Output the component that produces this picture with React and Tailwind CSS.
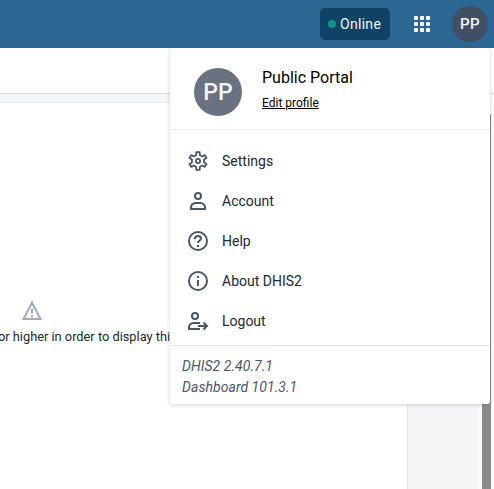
const icon = {
  width: 24,
  height: 24,
  viewBox: '0 0 24 24',
  fill: 'none',
  stroke: '#4a5768',
  strokeWidth: 2,
};

// Outline of a six-toothed gear: two outer and two inner corners per tooth.
const gearPoints = [0, 60, 120, 180, 240, 300]
  .flatMap((tooth) =>
    [[-17, 6.2], [-11, 9], [11, 9], [17, 6.2]].map(([offset, radius]) => {
      const angle = ((tooth + offset) * Math.PI) / 180;
      return `${(12 + radius * Math.sin(angle)).toFixed(2)},${(12 - radius * Math.cos(angle)).toFixed(2)}`;
    })
  )
  .join(' ');

function SettingsIcon() {
  return (
    <svg {...icon} strokeWidth="1.8" strokeLinejoin="round">
      <polygon points={gearPoints} />
      <circle cx="12" cy="12" r="2.1" />
    </svg>
  );
}

function AccountIcon() {
  return (
    <svg {...icon}>
      <circle cx="12" cy="7" r="3" />
      <path d="M5 20v-1.500a4.500 4.500 0 0 1 4.500-4.500h5a4.500 4.500 0 0 1 4.500 4.500V20z" />
    </svg>
  );
}

function HelpIcon() {
  return (
    <svg {...icon}>
      <circle cx="12" cy="12" r="9" />
      <path d="M9 10V9.500C9 8 10.200 7 12 7s3 1 3 2.500c0 2-3 2-3 4.500" />
      <path d="M11 17h2" />
    </svg>
  );
}

function InfoIcon() {
  return (
    <svg {...icon}>
      <circle cx="12" cy="12" r="9" />
      <path d="M12 7v2M12 11v6" />
    </svg>
  );
}

function LogoutIcon() {
  return (
    <svg {...icon}>
      <circle cx="9" cy="7" r="3" />
      <path d="M14 14H7.500A4.500 4.500 0 0 0 3 18.500V20h11" />
      <path d="M12 17h9M17.500 13.500 21 17l-3.500 3.500" />
    </svg>
  );
}

const items = [
  ['Settings', SettingsIcon],
  ['Account', AccountIcon],
  ['Help', HelpIcon],
  ['About DHIS2', InfoIcon],
  ['Logout', LogoutIcon],
];

function HeaderBar() {
  return (
    <header className="flex h-12 items-center bg-[#2c6693] pr-[6px]">
      <div className="ml-auto flex h-8 w-[70px] items-center gap-1 rounded-[5px] bg-[#104167] pl-2 text-[14px] tracking-[0.3px] text-[#f3f5f7]">
        <span className="size-2 rounded-full bg-[#0b9b85]" />
        Online
      </div>
      <svg className="ml-6" width="16" height="16" fill="#fff">
        {[0, 6, 12].map((y) =>
          [0, 6, 12].map((x) => <rect key={`${x}-${y}`} x={x} y={y} width="4" height="4" rx="1" />)
        )}
      </svg>
      <div className="ml-[22px] flex size-9 items-center justify-center rounded-full bg-[#404f63] text-[15px] font-medium tracking-[0.500px] text-[#f3f5f7]">
        PP
      </div>
    </header>
  );
}

function Dashboard() {
  return (
    <main className="flex h-[441px] flex-col">
      <div className="h-[46px] border-b border-[#d0d9e5] bg-white" />
      <div className="flex min-h-0 flex-1">
        <div className="flex min-w-0 flex-1 flex-col bg-[#f3f5f7] pt-2">
          <div className="flex w-[408px] flex-1 flex-col border-t border-r border-[#e4e8ee] bg-white pt-[196px]">
            <svg className="ml-5 shrink-0" width="24" height="24" fill="none" stroke="#a0adba" strokeWidth="2">
              <path d="M12 3.500 20.500 20h-17z" />
              <path d="M12 9.500v5M12 16v2" />
            </svg>
            <p className="mt-[6px] ml-[-2px] text-[12.800px] leading-4 whitespace-nowrap text-[#212934]">
              or higher in order to display thi
            </p>
          </div>
        </div>
        <div className="w-[15px] bg-[#fcfcfc] pt-[9px] pl-[3px]">
          <svg width="9" height="11" fill="#8b8b8b">
            <path d="M4.500 0 9 2H0z" />
          </svg>
          <div className="h-[376px] w-[9px] bg-[#8b8b8b]" />
        </div>
      </div>
    </main>
  );
}

function ProfileMenu() {
  return (
    <div className="absolute top-12 left-[170px] h-[356px] w-80 rounded-[3px] bg-white shadow-[0_1px_4px_rgba(33,41,52,0.2)]">
      <div className="flex h-[82px] border-b border-[#e8edf2] pt-5 pl-6">
        <div className="flex size-12 items-center justify-center rounded-full bg-[#6a7180] pt-px text-[23px] leading-6 font-medium text-[#f3f5f7]">
          PP
        </div>
        <div className="ml-5 text-black">
          <div className="text-[16px] leading-[19px]">Public Portal</div>
          <div className="mt-[9px] text-[12px] leading-[14px] underline">Edit profile</div>
        </div>
      </div>
      <ul className="h-[215px] pt-[11px]">
        {items.map(([label, Icon]) => (
          <li key={label} className="flex h-10 items-center gap-3 pl-4 text-[14px] text-[#212934]">
            <Icon />
            {label}
          </li>
        ))}
      </ul>
      <div className="border-t border-[#e8e8e8] pt-[10px] pl-3 text-[14px] leading-[21px] tracking-[0.050px] text-[#4a5768] italic">
        <div>DHIS2 2.40.7.1</div>
        <div>Dashboard 101.3.1</div>
      </div>
    </div>
  );
}

export default function App() {
  return (
    <div className="relative h-[489px] w-[494px] overflow-hidden bg-white font-[Roboto,sans-serif]">
      <HeaderBar />
      <Dashboard />
      <ProfileMenu />
    </div>
  );
}
